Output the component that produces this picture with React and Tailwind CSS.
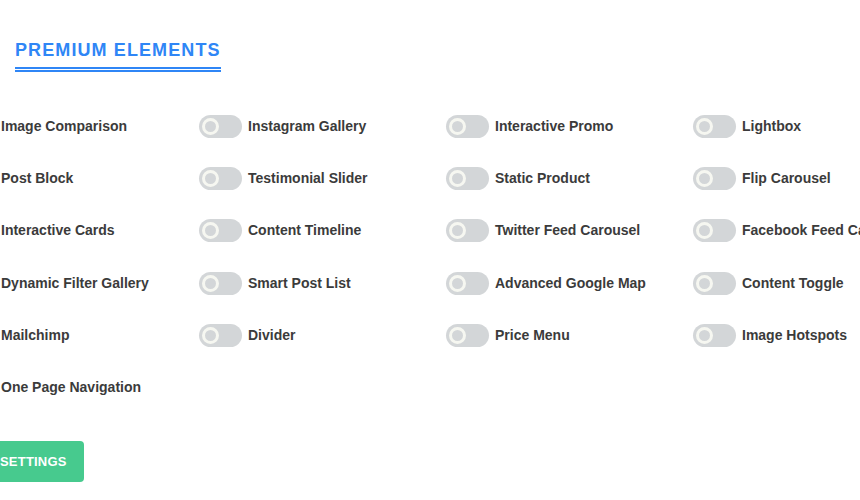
import React, { useState } from "react";

const elements = [
  "Image Comparison",
  "Instagram Gallery",
  "Interactive Promo",
  "Lightbox",
  "Post Block",
  "Testimonial Slider",
  "Static Product",
  "Flip Carousel",
  "Interactive Cards",
  "Content Timeline",
  "Twitter Feed Carousel",
  "Facebook Feed Carousel",
  "Dynamic Filter Gallery",
  "Smart Post List",
  "Advanced Google Map",
  "Content Toggle",
  "Mailchimp",
  "Divider",
  "Price Menu",
  "Image Hotspots",
  "One Page Navigation",
];

function Toggle({ on, onClick }) {
  return (
    <button
      onClick={onClick}
      className={`relative w-[43px] h-[23px] shrink-0 rounded-full flex items-center px-[3px] ${
        on ? "bg-[#46c98f] justify-end" : "bg-[#d3d6d8] justify-start"
      }`}
    >
      <span className="w-[17px] h-[17px] rounded-full border-[3px] border-[#f6f7f1] bg-[#d3d6d8]"></span>
    </button>
  );
}

export default function App() {
  const [enabled, setEnabled] = useState({});

  const flip = (name) => setEnabled({ ...enabled, [name]: !enabled[name] });

  return (
    <div
      className="w-[860px] h-[500px] overflow-hidden bg-white text-[#3b3b3b]"
      style={{ fontFamily: '"Liberation Sans", Arial, sans-serif' }}
    >
      {/* Heading */}
      <div className="pt-[39px] pl-[15px]">
        <h2 className="inline-block text-[18px] font-bold tracking-[1.1px] text-[#2f86f6] leading-[20px] pb-[7px] border-b-[5px] border-double border-[#2f86f6]">
          PREMIUM ELEMENTS
        </h2>
      </div>

      {/* Element grid */}
      <div className="ml-[-48px] mt-[28px] w-[988px] grid grid-cols-4">
        {elements.map((name) => (
          <div key={name} className="h-[52.3px] flex items-center gap-[6px]">
            <Toggle on={!!enabled[name]} onClick={() => flip(name)} />
            <span className="text-[14px] font-bold whitespace-nowrap">{name}</span>
          </div>
        ))}
      </div>

      {/* Save button */}
      <button className="mt-[27px] ml-[-18px] h-[41px] pl-[18px] pr-[17px] rounded-[4px] bg-[#47ca8e] text-white text-[13px] font-bold tracking-[0.2px]">
        SETTINGS
      </button>
    </div>
  );
}
